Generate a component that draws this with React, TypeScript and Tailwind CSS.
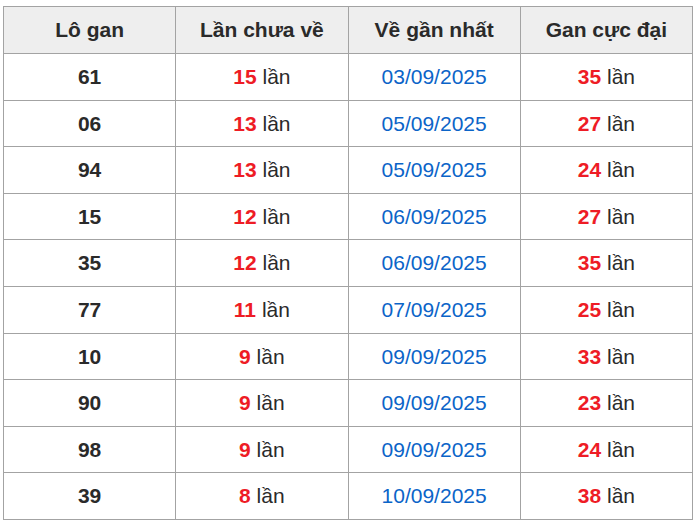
import React from "react";

const rows: [string, number, string, number][] = [
  ["61", 15, "03/09/2025", 35],
  ["06", 13, "05/09/2025", 27],
  ["94", 13, "05/09/2025", 24],
  ["15", 12, "06/09/2025", 27],
  ["35", 12, "06/09/2025", 35],
  ["77", 11, "07/09/2025", 25],
  ["10", 9, "09/09/2025", 33],
  ["90", 9, "09/09/2025", 23],
  ["98", 9, "09/09/2025", 24],
  ["39", 8, "10/09/2025", 38],
];

export default function App() {
  const cell = "border border-[#a3a3a3] text-center align-middle p-0";
  return (
    <div className="w-[700px] h-[528px] bg-white pl-[3px] pt-[6px]" style={{ fontFamily: '"Liberation Sans", Arial, sans-serif' }}>
      <table className="w-[690px] border-collapse table-fixed text-[21px] text-[#2a2a2a]">
        <thead>
          <tr className="h-[47px] bg-[#eeeeee]">
            <th className={`${cell} font-bold`}>Lô gan</th>
            <th className={`${cell} font-bold`}>Lần chưa về</th>
            <th className={`${cell} font-bold`}>Về gần nhất</th>
            <th className={`${cell} font-bold`}>Gan cực đại</th>
          </tr>
        </thead>
        <tbody>
          {rows.map(([lo, chua, date, max], i) => (
            <tr key={i} className="h-[46.6px]">
              <td className={`${cell} font-bold`}>{lo}</td>
              <td className={cell}>
                <span className="font-bold text-[#ee1c25]">{chua}</span> lần
              </td>
              <td className={`${cell} text-[#0b64c8]`}>{date}</td>
              <td className={cell}>
                <span className="font-bold text-[#ee1c25]">{max}</span> lần
              </td>
            </tr>
          ))}
        </tbody>
      </table>
    </div>
  );
}
